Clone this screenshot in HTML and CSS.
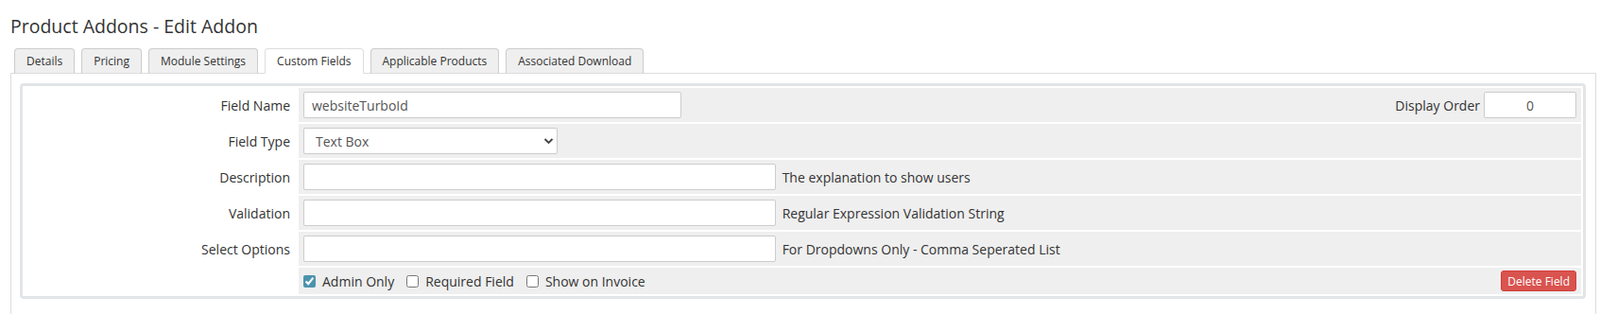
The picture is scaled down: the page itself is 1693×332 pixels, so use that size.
FILE: index.html
```
<!DOCTYPE html>
<html lang="en">
<head>
  <meta charset="UTF-8">
  <meta name="viewport" content="width=device-width, initial-scale=1.0">
  <title>Product Addons - Edit Addon</title>
  <link rel="stylesheet" href="styles.css">
</head>
<body>

  <h1 class="page-title">Product Addons - Edit Addon</h1>

  <!-- Tabs -->
  <ul class="tabs">
    <li class="tab">Details</li>
    <li class="tab">Pricing</li>
    <li class="tab">Module Settings</li>
    <li class="tab active">Custom Fields</li>
    <li class="tab">Applicable Products</li>
    <li class="tab">Associated Download</li>
  </ul>

  <div class="tab-panel">
    <div class="field-box">
      <table class="field-table">
        <tr>
          <td class="label-cell">Field Name</td>
          <td class="input-cell">
            <div class="split">
              <input type="text" class="text-input w-name" value="websiteTurboId">
              <div class="order">
                <span>Display Order</span>
                <input type="text" class="text-input w-order" value="0">
              </div>
            </div>
          </td>
        </tr>
        <tr>
          <td class="label-cell">Field Type</td>
          <td class="input-cell">
            <div class="select-wrap">
              <select class="select-input">
                <option>Text Box</option>
                <option>Drop Down</option>
                <option>Tick Box</option>
              </select>
              <svg class="chevron" width="11" height="8" viewBox="0 0 11 8">
                <polyline points="1.5,2 5.5,6 9.5,2" fill="none" stroke="#444" stroke-width="1.9"/>
              </svg>
            </div>
          </td>
        </tr>
        <tr>
          <td class="label-cell">Description</td>
          <td class="input-cell">
            <input type="text" class="text-input w-wide">
            <span class="help">The explanation to show users</span>
          </td>
        </tr>
        <tr>
          <td class="label-cell">Validation</td>
          <td class="input-cell">
            <input type="text" class="text-input w-wide">
            <span class="help">Regular Expression Validation String</span>
          </td>
        </tr>
        <tr>
          <td class="label-cell">Select Options</td>
          <td class="input-cell">
            <input type="text" class="text-input w-wide">
            <span class="help">For Dropdowns Only - Comma Seperated List</span>
          </td>
        </tr>
        <tr>
          <td class="label-cell"></td>
          <td class="input-cell check-cell">
            <div class="split">
              <div class="checks">
                <label class="check"><input type="checkbox" checked> Admin Only</label>
                <label class="check"><input type="checkbox"> Required Field</label>
                <label class="check"><input type="checkbox"> Show on Invoice</label>
              </div>
              <button class="btn-danger">Delete Field</button>
            </div>
          </td>
        </tr>
      </table>
    </div>
  </div>

</body>
</html>
```
FILE: styles.css
```
body {
  margin: 0;
  padding: 0 4px 0 11px;
  font-family: "Open Sans", Arial, sans-serif;
  font-size: 14px;
  color: #333;
  background-color: #fff;
}

.page-title {
  font-size: 19.5px;
  font-weight: normal;
  line-height: 22px;
  margin: 17px 0 12px;
  color: #333;
}

/* Tabs */
.tabs {
  list-style-type: none;
  display: flex;
  gap: 7px;
  margin: 0 0 -1px;
  padding: 0 0 0 4px;
  position: relative;
  z-index: 1;
}

.tab {
  font-size: 12px;
  line-height: 25px;
  padding: 0 12px;
  background-color: #efefef;
  border: 1px solid #ccc;
  border-bottom-color: #ddd;
  border-radius: 4px 4px 0 0;
  color: #333;
  cursor: pointer;
}

.tab.active {
  background-color: #fff;
  border-color: #ddd;
  border-bottom-color: #fff;
}

.tab-panel {
  border: 1px solid #ddd;
  border-bottom: none;
  padding: 10px 10px 30px 9px;
}

.field-box {
  border: 3px solid #e2e5e8;
  border-radius: 4px;
}

.field-table {
  width: 100%;
  border-spacing: 2px;
}

.label-cell {
  width: 281px;
  padding: 0 7px 0 0;
  text-align: right;
  white-space: nowrap;
}

.input-cell {
  background-color: #efefef;
  padding: 4px 5px;
}

.check-cell {
  padding: 3px 5px;
}

.split {
  display: flex;
  justify-content: space-between;
  align-items: center;
}

.text-input {
  box-sizing: border-box;
  height: 28px;
  padding: 0 8px;
  font-family: inherit;
  font-size: 14px;
  color: #555;
  border: 1px solid #ccc;
  border-radius: 2px;
  background-color: #fff;
  vertical-align: middle;
}

.w-name {
  width: 400px;
}

.w-wide {
  width: 500px;
}

.w-order {
  width: 98px;
  text-align: center;
}

.order {
  display: flex;
  align-items: center;
  gap: 4px;
}

.help {
  margin-left: 3px;
  vertical-align: middle;
}

.select-wrap {
  position: relative;
  width: 269px;
}

.select-input {
  appearance: none;
  box-sizing: border-box;
  width: 100%;
  height: 28px;
  padding: 0 12px;
  font-family: inherit;
  font-size: 14px;
  color: #555;
  border: 1px solid #ccc;
  border-radius: 2px;
  background-color: #fff;
  display: block;
}

.chevron {
  position: absolute;
  right: 4px;
  top: 10px;
  pointer-events: none;
}

.checks {
  display: flex;
  align-items: center;
}

.check {
  display: flex;
  align-items: center;
  margin-right: 13px;
}

.check input {
  width: 13px;
  height: 13px;
  margin: 0 7px 0 0;
  accent-color: #4b93ad;
}

.btn-danger {
  height: 22px;
  padding: 0 6px;
  font-family: inherit;
  font-size: 12px;
  color: #fff;
  background-color: #d9534f;
  border: 1px solid #d43f3a;
  border-radius: 3px;
  cursor: pointer;
}
```
